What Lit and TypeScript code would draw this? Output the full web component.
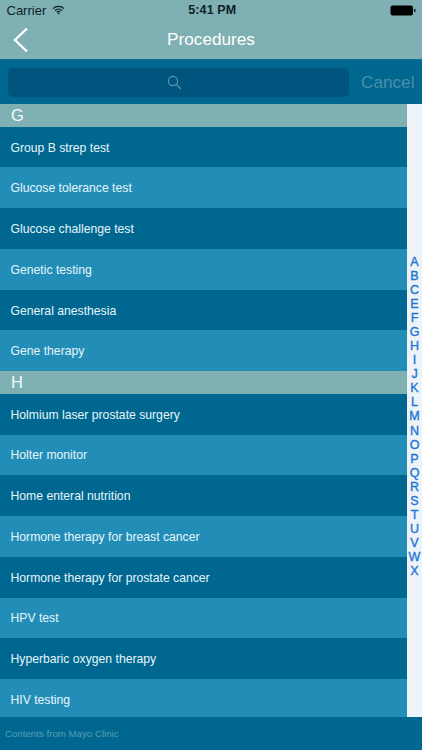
import { LitElement, html, css } from "lit";
import { customElement } from "lit/decorators.js";

const groups: { key: string; items: string[] }[] = [
  { key: "G", items: ["Group B strep test", "Glucose tolerance test", "Glucose challenge test", "Genetic testing", "General anesthesia", "Gene therapy"] },
  { key: "H", items: ["Holmium laser prostate surgery", "Holter monitor", "Home enteral nutrition", "Hormone therapy for breast cancer", "Hormone therapy for prostate cancer", "HPV test", "Hyperbaric oxygen therapy", "HIV testing"] },
];
const letters = "ABCEFGHIJKLMNOPQRSTUVWX".split("");

@customElement("app-root")
export class AppRoot extends LitElement {
  static styles = css`
    :host { display: block; width: 422px; height: 750px; overflow: hidden; font-family: "Liberation Sans", Arial, sans-serif; background: #006890; }
    .page { display: flex; flex-direction: column; height: 750px; }
    .top { background: #7fb0b3; height: 59px; flex: none; display: flex; flex-direction: column; }
    .status { height: 20px; display: grid; grid-template-columns: 1fr auto 1fr; align-items: center; padding: 0 6px 0 6.5px; font-size: 13px; color: #0c2226; }
    .status .left { display: flex; align-items: center; gap: 6px; }
    .status .time { font-weight: 700; font-size: 12.5px; letter-spacing: 0.1px; transform: translateX(1px); }
    .status .right { display: flex; justify-content: flex-end; align-items: center; }
    .nav { flex: 1; display: grid; grid-template-columns: 1fr auto 1fr; align-items: center; color: #fff; }
    .nav .back { display: flex; padding-left: 13px; }
    .nav .title { font-size: 17.2px; }
    .search { height: 45px; flex: none; background: #006890; display: flex; align-items: center; padding: 0 8px; gap: 12px; border-top: 1px solid #0f6f94; box-sizing: border-box; }
    .field { flex: 1; height: 29px; border-radius: 5px; background: #00557f; display: flex; align-items: center; justify-content: center; padding-right: 8px; box-sizing: border-box; }
    .cancel { font-size: 17.2px; color: #4a8ea8; width: 53px; }
    .body { flex: none; height: 613px; display: flex; overflow: hidden; }
    .list { flex: 1; min-width: 0; height: 613px; overflow: hidden; }
    .head { height: 22.67px; background: #7fb0b3; color: #f4fafa; font-size: 16.5px; line-height: 22.67px; padding-left: 11px; box-sizing: border-box; }
    .row { height: 40.75px; flex: none; display: flex; align-items: center; padding: 1px 0 0 10.5px; font-size: 12.2px; color: #e6f5f9; box-sizing: border-box; }
    .row.dark { background: #006890; }
    .row.light { background: #228eb8; }
    .index { flex: none; width: 15px; background: #edf3f6; display: flex; flex-direction: column; align-items: center; justify-content: center; padding: 12px 0 0 0; box-sizing: border-box; }
    .index span { height: 14.05px; line-height: 14.05px; font-size: 12.5px; color: #1c74d8; -webkit-text-stroke: 0.35px #1c74d8; }
    .foot { flex: 1; background: #006890; display: flex; align-items: center; padding-left: 5px; font-size: 9.7px; color: #5a9ab2; }
  `;

  render() {
    let i = 0;
    return html`<div class="page">
      <div class="top">
        <div class="status">
          <div class="left">Carrier
            <svg width="13" height="10" viewBox="0 0 13 10"><path d="M1 3.6a8 8 0 0 1 11 0M2.9 5.5a5.2 5.2 0 0 1 7.2 0M4.7 7.3a2.6 2.6 0 0 1 3.6 0" fill="none" stroke="#0c2226" stroke-width="1.3"/><path d="M5.4 8.2a1.6 1.6 0 0 1 2.2 0L6.5 9.5z" fill="#0c2226"/></svg>
          </div>
          <div class="time">5:41 PM</div>
          <div class="right"><svg width="26" height="11" viewBox="0 0 26 11"><rect x="0.5" y="0.5" width="22.5" height="10" rx="2" fill="#000"/><rect x="24" y="3.7" width="1.5" height="3.6" rx="0.7" fill="#0c2226"/></svg></div>
        </div>
        <div class="nav">
          <div class="back"><svg width="16" height="26" viewBox="0 0 16 26"><path d="M14 1.5 2 13l12 11.5" fill="none" stroke="#fff" stroke-width="2.4"/></svg></div>
          <div class="title">Procedures</div>
          <div></div>
        </div>
      </div>
      <div class="search">
        <div class="field"><svg width="15" height="15" viewBox="0 0 15 15"><circle cx="6" cy="6" r="4.6" fill="none" stroke="#5f97ad" stroke-width="1.1"/><path d="M9.5 9.5 14 14" stroke="#5f97ad" stroke-width="1.3"/></svg></div>
        <div class="cancel">Cancel</div>
      </div>
      <div class="body">
        <div class="list">
          ${groups.map((g) => html`
            <div class="head">${g.key}</div>
            ${g.items.map((t) => html`<div class="row ${i++ % 2 ? "light" : "dark"}">${t}</div>`)}
          `)}
        </div>
        <div class="index">${letters.map((l) => html`<span>${l}</span>`)}</div>
      </div>
      <div class="foot">Contents from Mayo Clinic</div>
    </div>`;
  }
}
